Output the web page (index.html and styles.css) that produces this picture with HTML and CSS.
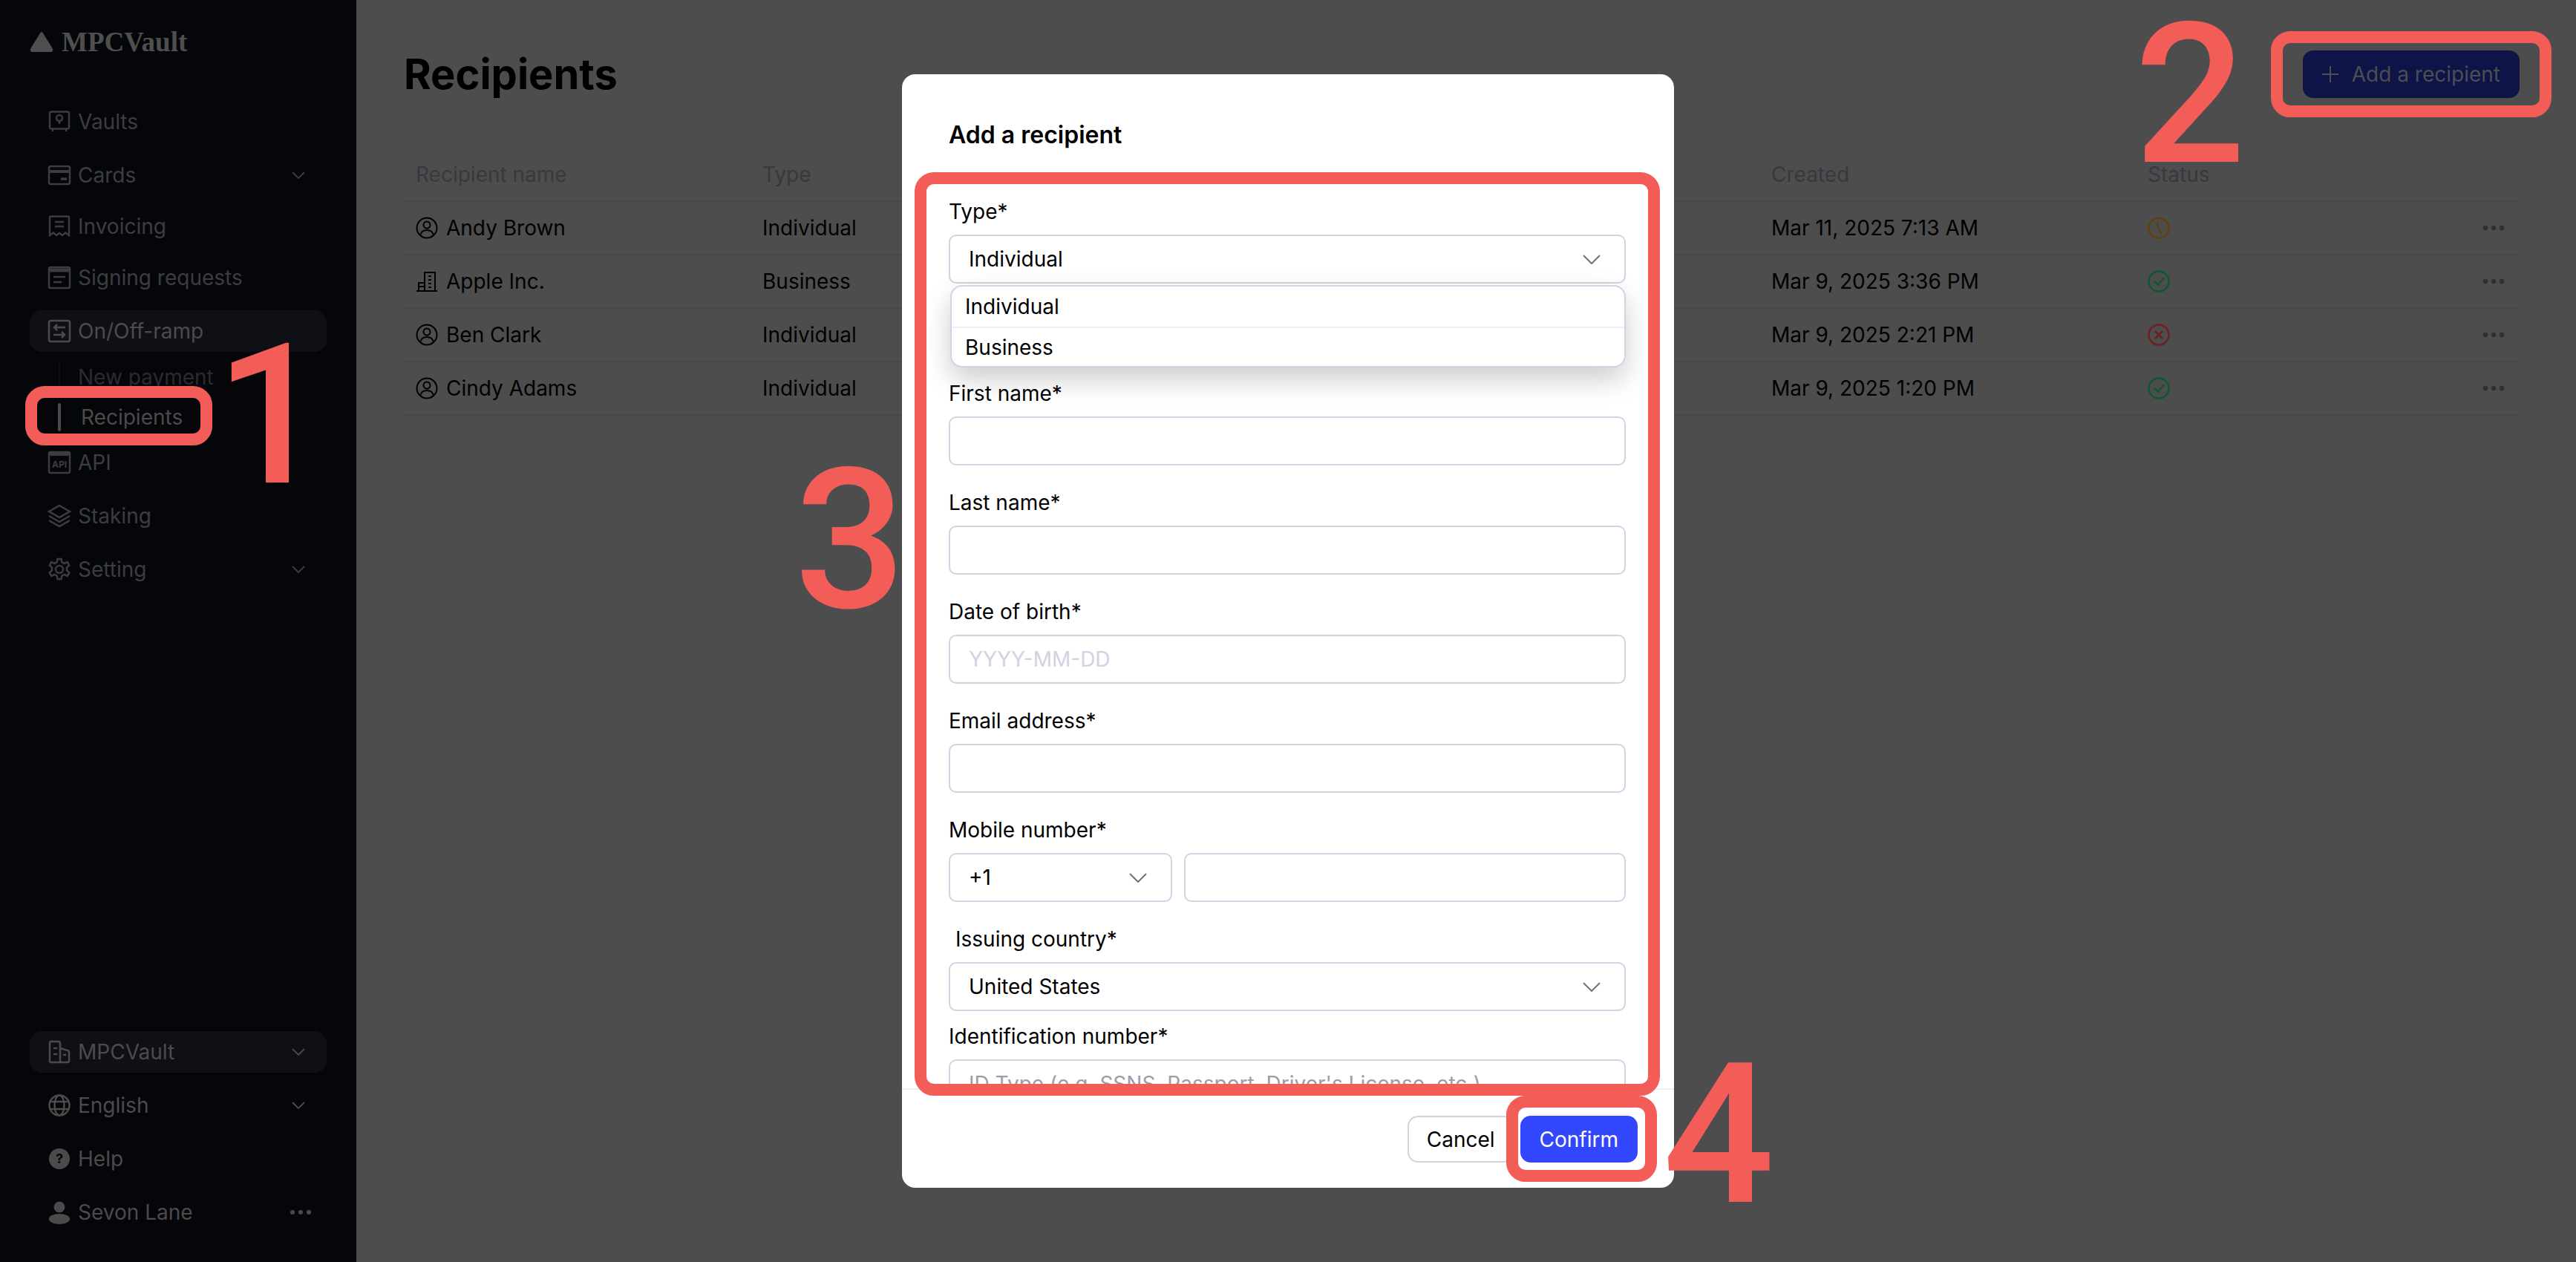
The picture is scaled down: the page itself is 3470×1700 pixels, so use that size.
FILE: index.html
```html
<!doctype html>
<html lang="en">
  <head>
    <meta charset="UTF-8" />
    <title>Recipients</title>
    <link rel="stylesheet" href="styles.css">
  </head>

  <body>
    <div class="sidebar">
      <div class="logo">
        <svg class="logo-mark" viewBox="0 0 32 28"><path d="M16 2.5 L29.5 24 Q30.5 26.5 28 26.5 L4 26.5 Q1.500 26.500 2.500 24 Z" fill="currentColor" stroke="currentColor" stroke-width="3" stroke-linejoin="round"/></svg>
        <span>MPCVault</span>
      </div>

      <div class="nav">
        <div class="nav-item">
          <svg class="icon" viewBox="0 0 32 32"><rect x="3" y="2.500" width="26" height="23" rx="2.500"/><circle cx="16" cy="11" r="4"/><path d="M16 15v4M7 26v3M25 26v3"/></svg>
          <span>Vaults</span>
        </div>
        <div class="nav-item">
          <svg class="icon" viewBox="0 0 32 32"><rect x="2" y="4" width="28" height="24" rx="2.500"/><path d="M2 11h28" stroke-width="4"/><path d="M18 21h8" stroke-width="3.500"/></svg>
          <span>Cards</span>
          <svg class="chevron" viewBox="0 0 18 10"><path d="M1 1l8 8 8-8"/></svg>
        </div>
        <div class="nav-item tight">
          <svg class="icon" viewBox="0 0 32 32"><path d="M3 4.500Q3 2.500 5 2.500H27Q29 2.500 29 4.500V28L24 24.500 20 28 16 25 12 28 8 24.500 3 28Z"/><path d="M10 10h12M10 16h12"/></svg>
          <span>Invoicing</span>
        </div>
        <div class="nav-item tight">
          <svg class="icon" viewBox="0 0 32 32"><rect x="2" y="2" width="28" height="28" rx="2"/><path d="M2 6h28" stroke-width="5"/><path d="M8 15h16M8 22h11"/></svg>
          <span>Signing requests</span>
        </div>
        <div class="nav-item current">
          <svg class="icon" viewBox="0 0 32 32"><rect x="2" y="2" width="28" height="28" rx="2.500"/><path d="M24 11H9M13 7l-4 4 4 4M8 21h15M19 17l4 4-4 4"/></svg>
          <span>On/Off-ramp</span>
        </div>

        <div class="sub-list">
          <div class="sub-item">New payment</div>
          <div class="sub-item active">Recipients</div>
        </div>

        <div class="nav-item after-sub">
          <svg class="icon" viewBox="0 0 32 32"><rect x="2" y="2" width="28" height="28" rx="2"/><path d="M2 5h28" stroke-width="4"/><text class="api-text" x="16" y="23">API</text></svg>
          <span>API</span>
        </div>
        <div class="nav-item">
          <svg class="icon" viewBox="0 0 32 32"><path d="M16 2L30 10 16 18 2 10Z"/><path d="M2 16l14 8 14-8M2 22l14 8 14-8"/></svg>
          <span>Staking</span>
        </div>
        <div class="nav-item">
          <svg class="icon" viewBox="0 0 32 32"><circle cx="16" cy="16" r="5"/><path d="M13.500 2h5l1 4.500 3 1.500 4.200-1.800 2.500 4.400-3.300 3q.3 1.900 0 3.800l3.300 3-2.500 4.400-4.200-1.800-3 1.500-1 4.500h-5l-1-4.500-3-1.500-4.200 1.800-2.500-4.400 3.300-3q-.3-1.900 0-3.800l-3.300-3 2.500-4.400 4.200 1.800 3-1.500Z"/></svg>
          <span>Setting</span>
          <svg class="chevron" viewBox="0 0 18 10"><path d="M1 1l8 8 8-8"/></svg>
        </div>
      </div>

      <div class="nav nav-bottom">
        <div class="nav-item current">
          <svg class="icon" viewBox="0 0 32 32"><path d="M3 30V4q0-2 2-2h10q2 0 2 2v26M17 11l10 3q2 .6 2 2.500V28q0 2-2 2H5q-2 0-2-2"/><path d="M8 11h5M8 19h5M21 20h4"/></svg>
          <span>MPCVault</span>
          <svg class="chevron" viewBox="0 0 18 10"><path d="M1 1l8 8 8-8"/></svg>
        </div>
        <div class="nav-item">
          <svg class="icon" viewBox="0 0 32 32"><circle cx="16" cy="16" r="13.500"/><ellipse cx="16" cy="16" rx="6.500" ry="13.500"/><path d="M3.500 11h25M3.500 21h25"/></svg>
          <span>English</span>
          <svg class="chevron" viewBox="0 0 18 10"><path d="M1 1l8 8 8-8"/></svg>
        </div>
        <div class="nav-item">
          <svg class="icon" viewBox="0 0 32 32"><circle class="solid" cx="16" cy="16" r="14"/><text class="help-text" x="16" y="22">?</text></svg>
          <span>Help</span>
        </div>
        <div class="nav-item">
          <svg class="icon" viewBox="0 0 32 32"><circle class="solid" cx="16" cy="9" r="7.500"/><ellipse class="solid" cx="16" cy="25" rx="14" ry="7"/></svg>
          <span>Sevon Lane</span>
          <svg class="more" viewBox="0 0 30 8"><circle cx="4" cy="4" r="3"/><circle cx="15" cy="4" r="3"/><circle cx="26" cy="4" r="3"/></svg>
        </div>
      </div>
    </div>

    <div class="main">
      <div class="page-head">
        <h1>Recipients</h1>
        <button class="add-btn">
          <svg viewBox="0 0 22 22"><path d="M11 0v22M0 11h22"/></svg>
          Add a recipient
        </button>
      </div>

      <div class="table">
        <div class="row table-head">
          <div>Recipient name</div>
          <div>Type</div>
          <div>Created</div>
          <div>Status</div>
          <div></div>
        </div>
        <div class="row">
          <div class="name">
            <svg viewBox="0 0 30 30"><circle cx="15" cy="15" r="13.500"/><circle cx="15" cy="11" r="4.500"/><path d="M6 25c1-5 5-7 9-7s8 2 9 7"/></svg>
            Andy Brown
          </div>
          <div>Individual</div>
          <div>Mar 11, 2025 7:13 AM</div>
          <div><svg class="status pending" viewBox="0 0 30 30"><circle cx="15" cy="15" r="13.500"/><path d="M13 7l1 9 5 6"/></svg></div>
          <div class="row-more"><svg viewBox="0 0 30 8"><circle cx="4" cy="4" r="3.200"/><circle cx="15" cy="4" r="3.200"/><circle cx="26" cy="4" r="3.200"/></svg></div>
        </div>
        <div class="row">
          <div class="name">
            <svg viewBox="0 0 30 30"><path d="M1 28h28M4 28V17h8M12 28V3h14v25M4 22h8M17 8h4M17 13h4M17 18h4M17 23h4"/></svg>
            Apple Inc.
          </div>
          <div>Business</div>
          <div>Mar 9, 2025 3:36 PM</div>
          <div><svg class="status ok" viewBox="0 0 30 30"><circle cx="15" cy="15" r="13.500"/><path d="M9 15l5 5 8-10"/></svg></div>
          <div class="row-more"><svg viewBox="0 0 30 8"><circle cx="4" cy="4" r="3.200"/><circle cx="15" cy="4" r="3.200"/><circle cx="26" cy="4" r="3.200"/></svg></div>
        </div>
        <div class="row">
          <div class="name">
            <svg viewBox="0 0 30 30"><circle cx="15" cy="15" r="13.500"/><circle cx="15" cy="11" r="4.500"/><path d="M6 25c1-5 5-7 9-7s8 2 9 7"/></svg>
            Ben Clark
          </div>
          <div>Individual</div>
          <div>Mar 9, 2025 2:21 PM</div>
          <div><svg class="status failed" viewBox="0 0 30 30"><circle cx="15" cy="15" r="13.500"/><path d="M10 10l10 10M20 10L10 20"/></svg></div>
          <div class="row-more"><svg viewBox="0 0 30 8"><circle cx="4" cy="4" r="3.200"/><circle cx="15" cy="4" r="3.200"/><circle cx="26" cy="4" r="3.200"/></svg></div>
        </div>
        <div class="row">
          <div class="name">
            <svg viewBox="0 0 30 30"><circle cx="15" cy="15" r="13.500"/><circle cx="15" cy="11" r="4.500"/><path d="M6 25c1-5 5-7 9-7s8 2 9 7"/></svg>
            Cindy Adams
          </div>
          <div>Individual</div>
          <div>Mar 9, 2025 1:20 PM</div>
          <div><svg class="status ok" viewBox="0 0 30 30"><circle cx="15" cy="15" r="13.500"/><path d="M9 15l5 5 8-10"/></svg></div>
          <div class="row-more"><svg viewBox="0 0 30 8"><circle cx="4" cy="4" r="3.200"/><circle cx="15" cy="4" r="3.200"/><circle cx="26" cy="4" r="3.200"/></svg></div>
        </div>
      </div>
    </div>

    <div class="modal">
      <div class="modal-title">Add a recipient</div>

      <div class="modal-body">
        <div class="field field-open">
          <div class="label">Type*</div>
          <div class="input">
            Individual
            <svg class="select-arrow" viewBox="0 0 24 13"><path d="M1 1l11 11L23 1"/></svg>
          </div>
          <div class="dropdown">
            <div class="dropdown-item">Individual</div>
            <div class="dropdown-item">Business</div>
          </div>
        </div>
        <div class="field">
          <div class="label">First name*</div>
          <div class="input"></div>
        </div>
        <div class="field">
          <div class="label">Last name*</div>
          <div class="input"></div>
        </div>
        <div class="field">
          <div class="label">Date of birth*</div>
          <div class="input placeholder">YYYY-MM-DD</div>
        </div>
        <div class="field">
          <div class="label">Email address*</div>
          <div class="input"></div>
        </div>
        <div class="field">
          <div class="label">Mobile number*</div>
          <div class="phone">
            <div class="input phone-code">
              +1
              <svg class="select-arrow" viewBox="0 0 24 13"><path d="M1 1l11 11L23 1"/></svg>
            </div>
            <div class="input phone-number"></div>
          </div>
        </div>
        <div class="field field-short">
          <div class="label label-indent">Issuing country*</div>
          <div class="input">
            United States
            <svg class="select-arrow" viewBox="0 0 24 13"><path d="M1 1l11 11L23 1"/></svg>
          </div>
        </div>
        <div class="field">
          <div class="label">Identification number*</div>
          <div class="input placeholder-dark">ID Type (e.g. SSNS, Passport, Driver's License, etc.)</div>
        </div>
      </div>

      <div class="modal-footer">
        <button class="btn">Cancel</button>
        <button class="btn btn-primary">Confirm</button>
      </div>
    </div>

    <!-- red callouts drawn over the screenshot -->
    <div class="box box-1"></div>
    <div class="box box-2"></div>
    <div class="box box-3"></div>
    <div class="box box-4"></div>
    <div class="mark mark-1">1</div>
    <div class="mark mark-2">2</div>
    <div class="mark mark-3">3</div>
    <div class="mark mark-4">4</div>
  </body>
</html>
```

FILE: styles.css
```css
* {
  box-sizing: border-box;
}

body {
  display: flex;
  width: 3470px;
  height: 1700px;
  margin: 0;
  overflow: hidden;
  background-color: #4d4d4d;
  color: #000;
  font-family: Inter, "Liberation Sans", sans-serif;
  font-size: 28px;
}

/* sidebar */
.sidebar {
  display: flex;
  flex-direction: column;
  flex-shrink: 0;
  width: 480px;
  height: 1700px;
  padding: 36px 40px 39px;
  background-color: #05060a;
  color: #3c3d43;
}

.logo {
  display: flex;
  align-items: center;
  height: 40px;
  margin-bottom: 60px;
  color: #4f4f4f;
  font-family: "Liberation Serif", serif;
  font-size: 37px;
  font-weight: 700;
}

.logo-mark {
  width: 32px;
  height: 28px;
  margin-right: 11px;
}

.nav-item {
  display: flex;
  align-items: center;
  height: 56px;
  margin-bottom: 16px;
  padding: 0 20px 0 24px;
  border-radius: 16px;
}

.nav-item.tight {
  margin-top: -3px;
}

.nav-item.current {
  background-color: #0f1015;
  margin-bottom: 0;
  color: #4b4b4f;
}

.nav-item.after-sub {
  margin-top: 6px;
}

.icon {
  flex-shrink: 0;
  width: 32px;
  height: 32px;
  margin-right: 9px;
  fill: none;
  stroke: currentColor;
  stroke-width: 2.5;
}

.icon .solid {
  fill: currentColor;
  stroke: none;
}

.api-text {
  fill: currentColor;
  stroke: none;
  font-size: 12px;
  font-weight: 700;
  text-anchor: middle;
}

.help-text {
  fill: #05060a;
  stroke: none;
  font-size: 18px;
  font-weight: 700;
  text-anchor: middle;
}

.chevron {
  width: 18px;
  height: 10px;
  margin-left: auto;
  margin-right: 9px;
  fill: none;
  stroke: currentColor;
  stroke-width: 1.8;
}

.more {
  width: 30px;
  height: 8px;
  margin-left: auto;
  fill: currentColor;
}

.sub-list {
  margin-top: 7px;
}

.sub-item {
  position: relative;
  display: flex;
  align-items: center;
  height: 54px;
  padding-left: 65px;
  color: #2a2b30;
}

.sub-item::before {
  content: "";
  position: absolute;
  left: 39px;
  top: 9px;
  width: 2px;
  height: 36px;
  background-color: #101116;
}

.sub-item.active {
  padding-left: 69px;
  color: #4b4b4b;
}

.sub-item.active::before {
  left: 38px;
  top: 8px;
  width: 4px;
  height: 38px;
  border-radius: 2px;
  background-color: #4b4b4b;
}

.nav-bottom {
  margin-top: auto;
  color: #4b4b4b;
}

.nav-bottom .nav-item {
  margin-bottom: 16px;
}

.nav-bottom .nav-item:last-child {
  margin-bottom: 0;
}

/* page */
.main {
  flex: 1;
  padding: 68px 76px 0 64px;
}

.page-head {
  display: flex;
  justify-content: space-between;
  align-items: center;
  height: 64px;
  margin-bottom: 68px;
}

h1 {
  margin: 0;
  font-size: 56px;
  font-weight: 700;
}

.add-btn {
  display: flex;
  align-items: center;
  gap: 18px;
  height: 64px;
  padding: 0 26px;
  border: 0;
  border-radius: 14px;
  background-color: #0e1447;
  color: #4d4d52;
  font-family: inherit;
  font-size: 28px;
}

.add-btn svg {
  width: 22px;
  height: 22px;
  fill: none;
  stroke: currentColor;
  stroke-width: 2;
}

.row {
  display: grid;
  grid-template-columns: 467px 1359px 507px 1fr 50px;
  align-items: center;
  height: 72px;
  padding-left: 16px;
  border-bottom: 2px solid #464646;
}

.table-head {
  color: #383940;
}

.name {
  display: flex;
  align-items: center;
  gap: 11px;
}

.name svg {
  width: 30px;
  height: 30px;
  fill: none;
  stroke: #000;
  stroke-width: 2;
}

.status {
  display: block;
  width: 30px;
  height: 30px;
  fill: none;
  stroke-width: 2.500;
}

.status.pending {
  stroke: #5f4208;
}

.status.ok {
  stroke: #0a5a30;
}

.status.failed {
  stroke: #6e1f1f;
}

.row-more svg {
  display: block;
  width: 30px;
  height: 8px;
  fill: #2f3036;
}

/* dialog */
.modal {
  position: absolute;
  left: 1215px;
  top: 100px;
  display: flex;
  flex-direction: column;
  width: 1040px;
  height: 1500px;
  border-radius: 18px;
  background-color: #fff;
}

.modal-title {
  height: 168px;
  padding: 63px 63px 0;
  font-size: 32px;
  font-weight: 600;
  line-height: 38px;
}

.modal-body {
  flex: 1;
  padding: 0 65px 0 63px;
  overflow: hidden;
}

.field {
  position: relative;
  margin-bottom: 33px;
}

.field-open {
  margin-bottom: 131px;
}

.field-short {
  margin-bottom: 17px;
}

.label {
  height: 34px;
  margin-bottom: 14px;
  line-height: 34px;
}

.label-indent {
  padding-left: 9px;
}

.input {
  display: flex;
  justify-content: space-between;
  align-items: center;
  height: 66px;
  padding: 0 32px 0 25px;
  border: 2px solid #d0d3e2;
  border-radius: 10px;
  background-color: #fff;
}

.placeholder {
  color: #d0d3e2;
}

.placeholder-dark {
  color: #9a9dac;
}

.select-arrow {
  width: 24px;
  height: 13px;
  fill: none;
  stroke: #6c7285;
  stroke-width: 2;
}

.phone {
  display: flex;
  gap: 16px;
}

.phone-code {
  width: 301px;
}

.phone-number {
  flex: 1;
}

.dropdown {
  position: absolute;
  left: 2px;
  top: 116px;
  width: 910px;
  border: 2px solid #d0d3e2;
  border-radius: 16px;
  background-color: #fff;
  box-shadow: 0 16px 36px rgba(0, 0, 0, 0.2);
}

.dropdown-item {
  display: flex;
  align-items: center;
  height: 54px;
  padding-left: 18px;
}

.dropdown-item + .dropdown-item {
  height: 53px;
  border-top: 2px solid #eeeff5;
}

.modal-footer {
  display: flex;
  justify-content: flex-end;
  gap: 8px;
  height: 134px;
  padding: 35px 49px 0 0;
  border-top: 2px solid #eeeff5;
}

.btn {
  height: 63px;
  padding: 0 24px;
  border: 2px solid #d0d3e2;
  border-radius: 14px;
  background-color: #fff;
  color: #000;
  font-family: inherit;
  font-size: 28px;
}

.btn-primary {
  border-color: #3347ff;
  background-color: #3347ff;
  color: #fff;
}

/* callouts */
.box {
  position: absolute;
  border: 16px solid #f25d58;
  border-radius: 26px;
}

.box-1 {
  left: 34px;
  top: 520px;
  width: 252px;
  height: 80px;
}

.box-2 {
  left: 3059px;
  top: 42px;
  width: 378px;
  height: 116px;
}

.box-3 {
  left: 1232px;
  top: 232px;
  width: 1004px;
  height: 1244px;
}

.box-4 {
  left: 2029px;
  top: 1476px;
  width: 203px;
  height: 116px;
}

.mark {
  position: absolute;
  color: #f25d58;
  font-family: Roboto, sans-serif;
  font-size: 264px;
  font-weight: 500;
  line-height: 264px;
}

.mark-1 {
  left: 290px;
  top: 428px;
}

.mark-2 {
  left: 2875px;
  top: -4px;
}

.mark-3 {
  left: 1070px;
  top: 596px;
}

.mark-4 {
  left: 2240px;
  top: 1397px;
}
```
